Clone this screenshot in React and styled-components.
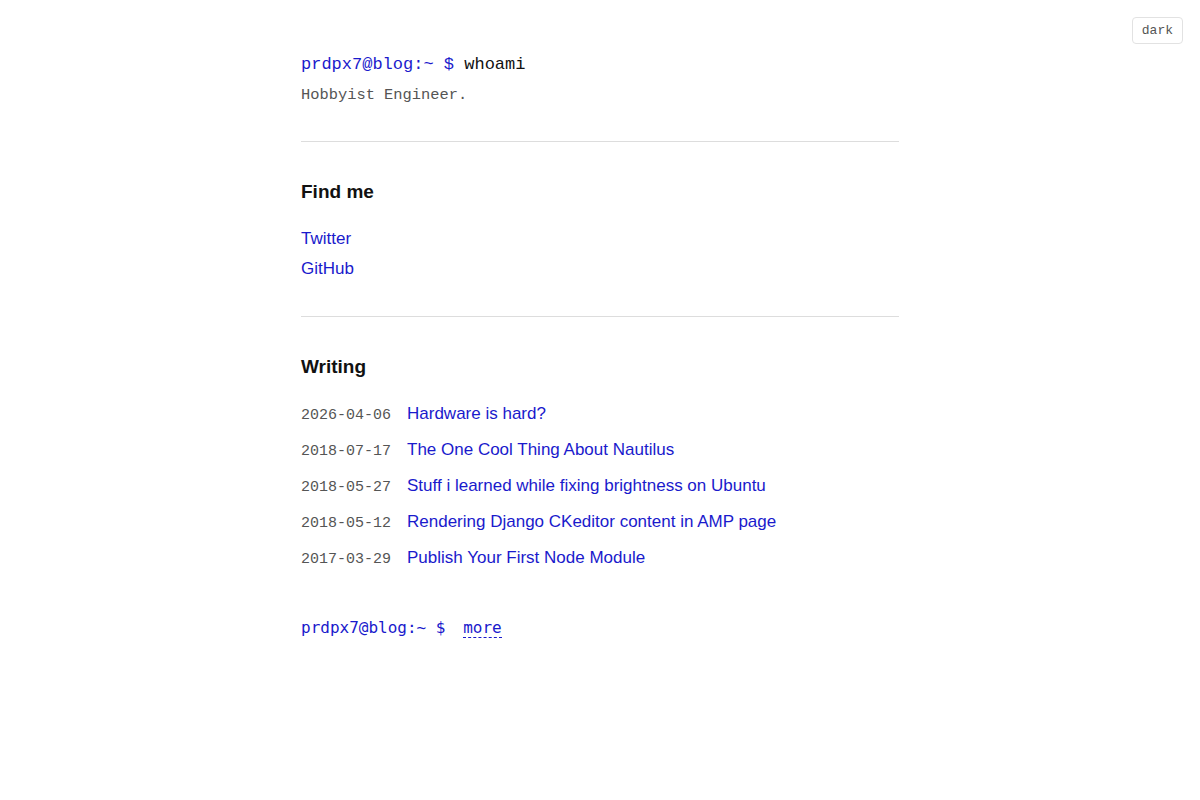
// home page: prompt header, links and recent posts
import React from 'react';
import styled, { createGlobalStyle } from 'styled-components';

const GlobalStyle = createGlobalStyle`
	html, body {
		margin: 0;
		padding: 0;
		background: #fff;
	}
	body {
		font-family: 'Liberation Sans', Arial, sans-serif;
		color: #111;
	}
`;

const posts = [
	{ date: '2026-04-06', title: 'Hardware is hard?' },
	{ date: '2018-07-17', title: 'The One Cool Thing About Nautilus' },
	{ date: '2018-05-27', title: 'Stuff i learned while fixing brightness on Ubuntu' },
	{ date: '2018-05-12', title: 'Rendering Django CKeditor content in AMP page' },
	{ date: '2017-03-29', title: 'Publish Your First Node Module' },
];

const App = () => (
	<>
		<GlobalStyle />
		<ThemeToggle>dark</ThemeToggle>
		<Page>
			<Header>
				<Prompt>
					<User>prdpx7@blog:~ $</User> whoami
				</Prompt>
				<Tagline>Hobbyist Engineer.</Tagline>
			</Header>
			<Rule />
			<Section>
				<SectionTitle>Find me</SectionTitle>
				<LinkList>
					<PlainLink href="#">Twitter</PlainLink>
					<PlainLink href="#">GitHub</PlainLink>
				</LinkList>
			</Section>
			<Rule />
			<Section>
				<SectionTitle>Writing</SectionTitle>
				<PostList>
					{posts.map(post => (
						<PostRow key={post.date}>
							<PostDate>{post.date}</PostDate>
							<PlainLink href="#">{post.title}</PlainLink>
						</PostRow>
					))}
				</PostList>
			</Section>
			<More>
				prdpx7@blog:~ $ <MoreLink href="#">more</MoreLink>
			</More>
		</Page>
	</>
);

const ThemeToggle = styled.button`
	position: absolute;
	top: 17px;
	right: 17px;
	height: 27px;
	padding: 0 9px;
	background: #fff;
	border: 1px solid #e2e2e2;
	border-radius: 4px;
	font-family: 'Liberation Mono', monospace;
	font-size: 13px;
	color: #555;
	cursor: pointer;
`;

const Page = styled.main`
	max-width: 598px;
	margin: 0 auto;
	padding: 53px 0 0;
`;

const Header = styled.header`
	padding-bottom: 36px;
`;

const Prompt = styled.div`
	font-family: 'Liberation Mono', monospace;
	font-size: 17px;
	line-height: 24px;
	color: #111;
`;

const User = styled.span`
	color: #1a1acc;
`;

const Tagline = styled.p`
	margin: 8px 0 0;
	font-family: 'Liberation Mono', monospace;
	font-size: 15.4px;
	line-height: 20px;
	color: #555;
`;

const Rule = styled.hr`
	margin: 0;
	border: 0;
	border-top: 1px solid #ddd;
`;

const Section = styled.section`
	padding: 38px 0 35px;
`;

const SectionTitle = styled.h2`
	margin: 0 0 23px;
	font-size: 19px;
	line-height: 24px;
	font-weight: 700;
	color: #111;
`;

const LinkList = styled.div`
	display: flex;
	flex-direction: column;
	align-items: flex-start;
	gap: 6px;
`;

const PlainLink = styled.a`
	font-size: 17px;
	line-height: 24px;
	color: #1a1acc;
	text-decoration: none;
`;

const PostList = styled.ul`
	list-style: none;
	margin: 0;
	padding: 0;
	display: flex;
	flex-direction: column;
	gap: 12px;
`;

const PostRow = styled.li`
	display: flex;
	align-items: baseline;
	gap: 16px;
`;

const PostDate = styled.span`
	font-family: 'Liberation Mono', monospace;
	font-size: 15px;
	color: #555;
`;

const More = styled.div`
	margin-top: 11px;
	font-family: 'DejaVu Sans Mono', monospace;
	font-size: 16px;
	line-height: 24px;
	color: #1a1acc;
	white-space: pre;
`;

const MoreLink = styled.a`
	margin-left: 8px;
	color: #1a1acc;
	text-decoration: none;
	border-bottom: 1px dashed #1a1acc;
`;

export default App;
